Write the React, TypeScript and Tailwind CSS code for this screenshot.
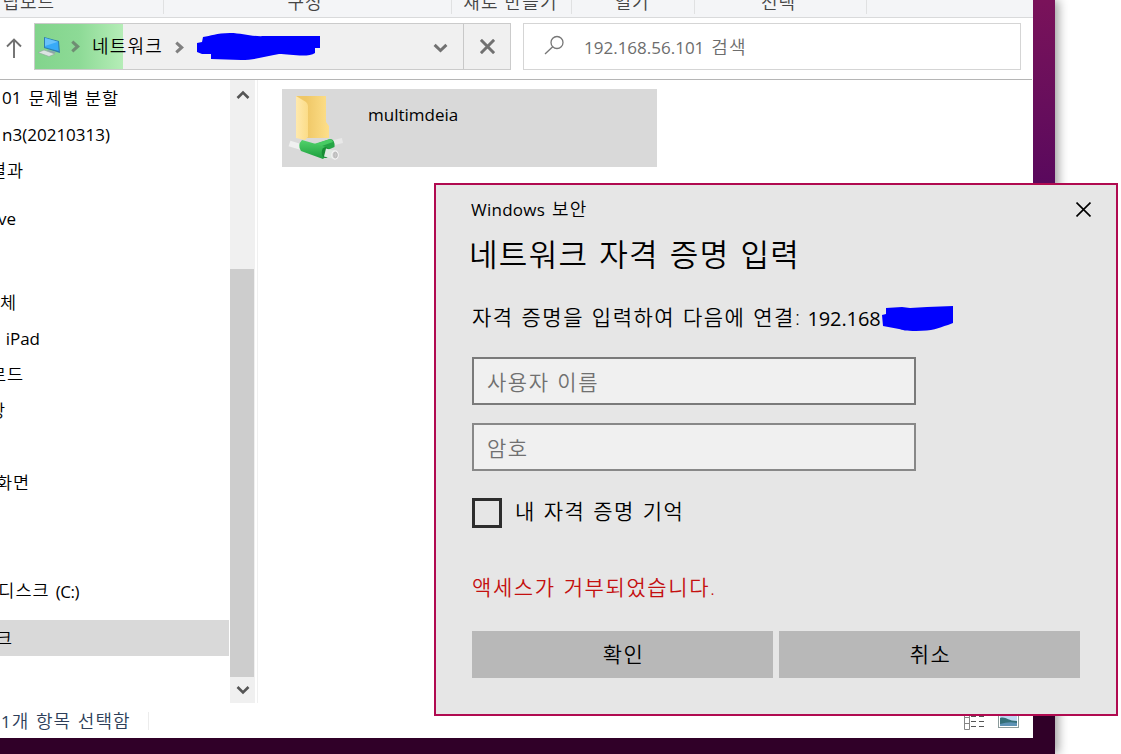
import React from "react";

const font = "font-['Open_Sans','Noto_Sans_CJK_KR',sans-serif]";

const treeItems = [
  { lead: "01", label: "문제별 분할", cls: "mt-px w-[119px] leading-[34px] tracking-[0.9px]" },
  { label: "n3(20210313)", cls: "w-[110px] text-[17px] font-normal" },
  { label: "결과", cls: "w-[24px] leading-[34px] tracking-[0.9px]" },
  { label: "ve", cls: "mt-[12px] w-[16px] text-[17px] font-normal" },
  { label: "체", cls: "mt-[47px] w-[17px] tracking-[0.9px]" },
  { label: "iPad", cls: "w-[40px] text-[17px] leading-[38px] font-normal" },
  { label: "로드", cls: "w-[24px] tracking-[0.9px]" },
  { label: "상", cls: "w-[6px] tracking-[0.9px]" },
  { label: "화면", cls: "mt-[36px] w-[30px] tracking-[0.9px]" },
];

function Chevron({ d, className, w = 2.6 }: { d: string; className: string; w?: number }) {
  return (
    <svg viewBox="0 0 14 14" className={`shrink-0 ${className}`} fill="none" stroke="currentColor" strokeWidth={w}>
      <path d={d} />
    </svg>
  );
}

function Ribbon() {
  return (
    <div className="flex h-[18px] shrink-0 overflow-hidden border-b border-[#d9dadb] bg-[#f4f5f7] text-[18px] leading-[24px] tracking-[0.9px] text-[#444]">
      <div className="flex h-[14px] w-[164px] border-r border-[#e0e1e2]">
        <div className="-mt-[10px] flex w-[55px] justify-end whitespace-nowrap">립보드</div>
      </div>
      <div className="flex h-[14px] w-[288px] justify-center border-r border-[#e0e1e2] pr-[5px]">
        <div className="-mt-[10px]">구성</div>
      </div>
      <div className="flex h-[14px] w-[120px] justify-center border-r border-[#e0e1e2] pr-[2px]">
        <div className="-mt-[10px] whitespace-nowrap tracking-[1.2px]">새로 만들기</div>
      </div>
      <div className="flex h-[14px] w-[123px] justify-center border-r border-[#e0e1e2] pr-[2px]">
        <div className="-mt-[10px]">열기</div>
      </div>
      <div className="flex h-[14px] w-[172px] justify-center border-r border-[#e0e1e2] pr-[4px]">
        <div className="-mt-[10px]">선택</div>
      </div>
    </div>
  );
}

function ComputerIcon() {
  return (
    <svg width="24" height="22" viewBox="0 0 24 22" className="shrink-0">
      <path d="M6 1 L21 5 L22 17 L6 12Z" fill="#2f7fae" />
      <path d="M7 2 L20 5.8 L20.7 15 L7 11.3Z" fill="#38aaf8" />
      <path d="M7 2 L20 5.8 L7 10Z" fill="#69c2fb" />
      <path d="M10 14 L18 16 L15 18 L8 16Z" fill="#8aa3ad" />
      <path d="M0 16.5 L6 14 L17 18 L11 20.5Z" fill="#dce3e2" stroke="#8fae9b" strokeWidth=".7" />
    </svg>
  );
}

function AddressRow() {
  return (
    <div className="mr-px flex h-[62px] shrink-0 border-b border-[#b5b5b5] pt-[5px]">
      <svg width="34" height="47" viewBox="0 0 34 47" className="shrink-0" fill="none" stroke="#707070" strokeWidth="1.9">
        <path d="M14 35V17M7 23.5L14 16.5L21 23.5" />
      </svg>
      <div className="flex h-[47px] w-[477px] shrink-0 border border-[#cbcbcb] bg-[#f0f0f0]">
        <div className="flex w-[88px] shrink-0 items-center bg-linear-to-r from-[#82d48c] via-[#8dda96] to-[#b5edb7] pl-[3px]">
          <ComputerIcon />
          <Chevron d="M4 2.5L9 7L4 11.5" className="ml-[6px] h-[15px] w-[15px] text-[#6f8e73]" w={2.9} />
          <div className="ml-[9px] whitespace-nowrap text-[18px] tracking-[1.2px] text-black">네트워크</div>
        </div>
        <Chevron d="M4 2.5L9 7L4 11.5" className="mt-[16px] ml-[49px] h-[15px] w-[15px] text-[#808080]" w={2.9} />
        <svg width="126" height="30" viewBox="0 0 126 30" className="mt-[8px] ml-[9px] shrink-0">
          <path d="M1 11L6 10L7 5C15 4 20 1 34 1C47 1 55 5 69 4L124 4V16H119V21C112 26 93 22 83 22C70 24 60 28 45 28L15 27V22H6L1 20Z" fill="#0000fe" />
        </svg>
        <Chevron d="M1.500 4.500L7 9.800L12.500 4.500" className="mt-[16px] ml-[111px] h-[15px] w-[15px] text-[#717171]" w={2.8} />
        <div className="ml-[15px] flex w-[47px] shrink-0 items-center justify-center border-l border-[#c8c8c8] pl-px text-[#717171]">
          <Chevron d="M.800 .800L13.200 13.200M13.200 .800L.800 13.200" className="h-[15px] w-[15px]" w={2.8} />
        </div>
      </div>
      <div className="ml-[12px] flex h-[47px] w-[498px] shrink-0 items-center border border-[#d5d5d5] bg-white">
        <svg width="20" height="20" viewBox="0 0 20 20" className="-mt-[3px] ml-[20px]" fill="none" stroke="#777" strokeWidth="1.3">
          <circle cx="13" cy="7.5" r="6" />
          <path d="M8.7 11.7L1 19" />
        </svg>
        <div className="mt-[2px] ml-[20px] text-[18px] text-[#6d6d6d]">
          <span className="text-[17px] font-normal">192.168.56.101</span>
          <span className="ml-[7px] tracking-[1.1px]">검색</span>
        </div>
      </div>
    </div>
  );
}

function FolderIcon() {
  return (
    <svg width="56" height="68" viewBox="0 0 56 68">
      <defs>
        <linearGradient id="back" x1="0" x2="1">
          <stop offset="0.3" stopColor="#efc766" />
          <stop offset="1" stopColor="#fddf8a" />
        </linearGradient>
        <linearGradient id="front" x1="0" x2="1">
          <stop offset="0" stopColor="#ffe9ad" />
          <stop offset="1" stopColor="#fbdc88" />
        </linearGradient>
        <linearGradient id="pipe" x1="0" y1="0" x2="0" y2="1">
          <stop offset="0" stopColor="#52d26c" />
          <stop offset="1" stopColor="#1c9e3c" />
        </linearGradient>
      </defs>
      <path d="M8 2H38V28L41 32V44H8Z" fill="url(#back)" />
      <path d="M8 2L18 8Q20 10 20 12V43L17 46L8 44Z" fill="url(#front)" />
      <path d="M1.500 49.500L13 53" stroke="#f0f0f0" strokeWidth="6" />
      <path d="M44 49L54.500 46.500" stroke="#e8e8e8" strokeWidth="5" />
      <path d="M25 51L42 45Q47 45 46.500 53L35 58Z" fill="#25a545" />
      <path d="M26 50L42 45Q44.500 46 45 48L31 53Z" fill="#48cb63" />
      <path d="M14 46L28 50L38 53Q43 59 35 65L13 57Q9 51 14 46Z" fill="url(#pipe)" />
      <ellipse cx="37.5" cy="58.500" rx="3.800" ry="5.500" fill="#168c33" />
      <path d="M37 58.500L47 61" stroke="#e1e8e3" strokeWidth="8" />
      <ellipse cx="47" cy="61" rx="3.200" ry="4.200" fill="#d4d4d4" stroke="#f5f5f5" strokeWidth="1.200" />
      <ellipse cx="47.500" cy="61" rx="1.800" ry="2.800" fill="#c8c8c8" stroke="#aaa" strokeWidth=".6" />
    </svg>
  );
}

function Explorer() {
  return (
    <div className="flex h-[738px] w-[1033px] flex-col overflow-hidden bg-white">
      <Ribbon />
      <AddressRow />
      <div className="flex h-[623px] shrink-0">
        <div className="flex w-[230px] flex-col text-[17.5px] leading-[36px] text-black">
          {treeItems.map((t) => (
            <div key={t.label} className={`flex h-[36px] shrink-0 justify-end whitespace-nowrap ${t.cls}`}>
              {t.lead && <span className="mr-[7px] text-[17px] font-normal tracking-normal">{t.lead}</span>}
              {t.label}
            </div>
          ))}
          <div className="mt-[73px] flex h-[36px] w-[79px] shrink-0 justify-end leading-[35px] whitespace-nowrap">
            <span className="tracking-[1.1px]">디스크</span>
            <span className="ml-[6px] text-[17px] leading-[37px] font-normal tracking-[-0.5px]">(C:)</span>
          </div>
          <div className="mt-[11px] h-[36px] w-[229px] shrink-0 bg-[#d9d9d9]">
            <div className="flex w-[12px] justify-end">크</div>
          </div>
        </div>
        <div className="flex w-[25px] flex-col items-center bg-[#f0f0f0] text-[#555]">
          <Chevron d="M1.500 10L7 4.500L12.500 10" className="mt-[8px] h-[14px] w-[14px]" />
          <div className="mt-[167px] h-[408px] w-[24px] shrink-0 self-start bg-[#cdcdcd]" />
          <Chevron d="M1.500 4L7 9.500L12.500 4" className="mt-[6px] h-[14px] w-[14px]" />
        </div>
        <div className="ml-[2px] w-px bg-[#f0f0f0]" />
        <div className="mt-[9px] ml-[24px] flex h-[78px] w-[375px] bg-[#d9d9d9] pt-[5px] pl-[6px]">
          <FolderIcon />
          <div className="ml-[24px] pt-[9px] text-[17px] leading-[24px] font-normal text-black">multimdeia</div>
        </div>
      </div>
      <div className="flex h-[35px] items-center text-[18px] text-[#2d3e59]">
        <div className="mt-[2px] w-[148px] pl-[1px] whitespace-nowrap tracking-[1.1px] [word-spacing:0.7px]">
          <span className="text-[17px] font-normal">1</span>개 항목 선택함
        </div>
        <div className="h-[18px] w-px bg-[#ececec]" />
        <svg width="58" height="30" viewBox="0 0 58 30" className="-mt-[3px] ml-[814px]">
          <g fill="none" stroke="#858585">
            <path d="M1.500 0V25.500H6.500V0M1.500 13.500H6.500M1.500 19.500H6.500" />
            <path d="M8 12.500H13M16 12.500H21M8 17.500H13M16 17.500H21M8 22.500H13M16 22.500H21" stroke="#555" />
          </g>
          <rect x="35.500" y="5" width="20" height="18.500" fill="#fff" stroke="#8b9b9b" />
          <rect x="37" y="7" width="17" height="15" fill="#bed8f2" />
          <path d="M37 14C43 12 44 17 54 17V22H37Z" fill="#346f78" />
          <path d="M37 20Q46 17 54 19V22H37Z" fill="#5d92b5" />
        </svg>
      </div>
    </div>
  );
}

function Dialog() {
  return (
    <div className="absolute top-[183px] left-[434px] flex h-[533px] w-[684px] flex-col border-2 border-[#b00a50] bg-[#e6e6e6] pl-[36px] text-black">
      <div className="flex h-[48px] shrink-0 items-center justify-between pr-[25px]">
        <div className="-ml-px text-[18px]">
          <span className="text-[17px] font-normal tracking-[0.25px]">Windows</span>
          <span className="ml-[7px] tracking-[1.2px]">보안</span>
        </div>
        <Chevron d="M.500 .500L13.500 13.500M13.500 .500L.500 13.500" className="h-[15px] w-[15px]" w={1.5} />
      </div>
      <h1 className="-ml-[3px] h-[44px] shrink-0 text-[31px] leading-[42px] tracking-[1.3px] [word-spacing:1.6px]">네트워크 자격 증명 입력</h1>
      <div className="mt-[25px] flex h-[32px] shrink-0 items-center text-[21px] whitespace-nowrap">
        <span className="tracking-[1.5px] [word-spacing:0.9px]">자격 증명을 입력하여 다음에 연결:</span>
        <span className="mt-[2px] ml-[6px] text-[20px] font-normal tracking-[-0.1px]">192.168</span>
        <svg width="72" height="26" viewBox="0 0 72 26" className="mt-[2px] ml-px">
          <path d="M0 9L4 8V2L20 1L28 2L45 1L71 0V17L66 19C56 22 51 25 34 25C24 25 20 24 17 23L1 20Z" fill="#0000fe" />
        </svg>
      </div>
      <div className="mt-[23px] flex h-[48px] w-[444px] shrink-0 items-center border-2 border-[#7a7a7a] bg-[#f0f0f0] pt-[3px] pl-[13px] text-[21px] tracking-[1.5px] text-[#707070] [word-spacing:0.9px]">
        사용자 이름
      </div>
      <div className="mt-[18px] flex h-[48px] w-[444px] shrink-0 items-center border-2 border-[#888] bg-[#f0f0f0] pt-[3px] pl-[13px] text-[21px] tracking-[1.5px] text-[#707070]">
        암호
      </div>
      <div className="mt-[27px] flex h-[30px] shrink-0 items-center">
        <div className="h-[30px] w-[30px] border-3 border-[#2d2d2d]" />
        <div className="-mt-[2px] ml-[13px] text-[21px] tracking-[1.5px] [word-spacing:0.9px]">내 자격 증명 기억</div>
      </div>
      <div className="mt-[43px] h-[32px] text-[21px] leading-[32px] tracking-[1.6px] text-[#c41010] [word-spacing:0.9px]">액세스가 거부되었습니다.</div>
      <div className="mt-[28px] flex gap-[6px] text-[21px] tracking-[1.5px]">
        <div className="flex h-[47px] w-[301px] items-center justify-center bg-[#b8b8b8] pl-[2px]">확인</div>
        <div className="flex h-[47px] w-[301px] items-center justify-center bg-[#b8b8b8] pl-[2px]">취소</div>
      </div>
    </div>
  );
}

export default function App() {
  return (
    <div className={`relative h-[754px] w-[1121px] overflow-hidden bg-white font-[350] ${font}`}>
      <div className="h-[754px] w-[1055px] bg-linear-to-b from-[#7a125a] via-[#59085d] via-25% to-[#300028] to-90% shadow-[3px_0_10px_rgba(0,0,0,0.4)]">
        <Explorer />
      </div>
      <Dialog />
    </div>
  );
}
